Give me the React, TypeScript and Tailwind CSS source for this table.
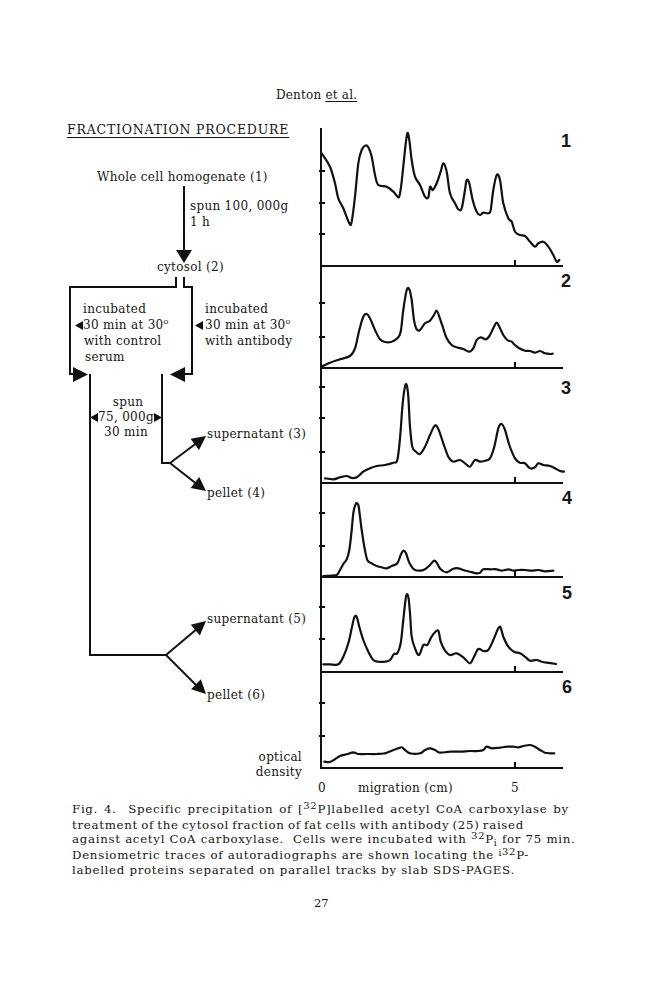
import React from "react";

type P = [number, number];

// traces read off the scan, in 3x zoom coords relative to an origin
const traces: { ox: number; oy: number; pts: P[] }[] = [
  {
    ox: 310,
    oy: 110,
    pts: [
      [35, 130], [60, 170], [75, 220], [85, 265], [100, 295], [118, 340], [125, 335], [135, 260], [145, 160], [155, 120],
      [165, 107], [175, 112], [185, 140], [195, 195], [205, 225], [230, 230], [250, 245], [265, 262], [270, 250], [275, 215],
      [285, 120], [292, 70], [298, 90], [305, 150], [315, 200], [330, 225], [345, 260], [355, 262], [360, 230], [368, 240],
      [380, 220], [392, 185], [400, 160], [410, 185], [420, 250], [435, 280], [445, 298], [455, 295], [465, 240], [470, 210],
      [478, 220], [488, 270], [500, 305], [510, 315], [520, 308], [535, 310], [542, 300], [550, 240], [560, 195], [570, 210],
      [580, 280], [595, 325], [605, 335], [615, 365], [630, 375], [645, 378], [660, 395], [675, 410], [685, 400], [700, 395],
      [715, 410], [730, 435], [740, 455], [748, 450],
    ],
  },
  {
    ox: 310,
    oy: 270,
    pts: [
      [35, 290], [60, 278], [90, 268], [120, 258], [135, 235], [148, 180], [160, 140], [170, 132], [180, 145], [195, 180],
      [210, 208], [225, 216], [245, 215], [262, 205], [272, 185], [280, 120], [290, 60], [298, 58], [305, 90], [312, 150],
      [320, 178], [330, 180], [345, 160], [360, 152], [372, 135], [380, 122], [388, 140], [398, 170], [410, 205], [425, 225],
      [440, 232], [460, 237], [478, 245], [490, 235], [500, 210], [512, 202], [528, 208], [540, 195], [552, 170], [560, 158],
      [568, 170], [580, 195], [592, 210], [605, 215], [615, 225], [628, 235], [645, 242], [660, 243], [675, 248], [690, 243],
      [705, 250], [720, 252], [728, 251],
    ],
  },
  {
    ox: 310,
    oy: 270,
    pts: [
      [45, 625], [70, 628], [90, 622], [110, 618], [125, 624], [140, 622], [160, 605], [180, 595], [200, 588], [225, 585],
      [250, 578], [262, 570], [270, 505], [278, 400], [285, 350], [290, 345], [295, 380], [300, 470], [307, 530], [318, 545],
      [330, 552], [345, 530], [360, 495], [372, 470], [380, 468], [390, 490], [400, 520], [415, 560], [430, 575], [450, 570],
      [465, 580], [480, 590], [495, 570], [510, 575], [525, 572], [540, 565], [553, 530], [565, 475], [575, 462], [585, 480],
      [598, 525], [615, 565], [630, 578], [645, 580], [660, 595], [675, 592], [685, 580], [700, 585], [720, 588], [735, 595],
      [750, 603], [762, 605],
    ],
  },
  {
    ox: 310,
    oy: 480,
    pts: [
      [40, 288], [60, 287], [80, 285], [90, 270], [100, 252], [110, 238], [118, 210], [125, 150], [130, 100], [137, 72],
      [145, 75], [150, 110], [155, 150], [163, 200], [172, 240], [185, 250], [200, 258], [215, 262], [230, 265], [245, 258],
      [262, 250], [272, 225], [280, 212], [288, 220], [298, 248], [312, 268], [330, 272], [345, 268], [360, 255], [372, 242],
      [380, 248], [392, 268], [410, 277], [430, 266], [445, 265], [460, 270], [480, 275], [500, 280], [510, 278], [520, 268],
      [540, 268], [560, 268], [575, 272], [595, 268], [610, 272], [625, 270], [645, 270], [665, 272], [685, 270], [705, 274],
      [730, 272],
    ],
  },
  {
    ox: 310,
    oy: 480,
    pts: [
      [40, 553], [60, 553], [85, 553], [100, 530], [115, 490], [125, 445], [133, 412], [140, 410], [148, 440], [160, 480],
      [175, 515], [190, 540], [205, 545], [225, 545], [240, 540], [252, 522], [262, 520], [272, 490], [280, 420], [288, 350],
      [295, 350], [300, 400], [305, 470], [315, 505], [327, 525], [340, 495], [352, 495], [362, 475], [372, 460], [385, 452],
      [392, 485], [405, 512], [420, 525], [440, 520], [460, 532], [480, 550], [492, 530], [505, 507], [520, 513], [535, 510],
      [550, 480], [565, 445], [572, 443], [580, 470], [595, 500], [612, 515], [630, 520], [645, 530], [660, 542], [680, 540],
      [695, 545], [710, 548], [738, 552],
    ],
  },
  {
    ox: 220,
    oy: 670,
    pts: [
      [313, 275], [330, 276], [345, 268], [360, 258], [380, 253], [400, 247], [415, 252], [440, 252], [470, 252], [495, 250],
      [515, 242], [535, 235], [545, 232], [555, 240], [570, 250], [600, 250], [615, 240], [630, 235], [645, 240], [660, 248],
      [690, 245], [720, 245], [750, 243], [775, 243], [790, 240], [800, 230], [815, 235], [840, 233], [860, 230], [880, 230],
      [895, 232], [910, 228], [930, 225], [945, 230], [960, 240], [975, 248], [990, 250], [1003, 250],
    ],
  },
];

function smooth(raw: P[], ox: number, oy: number) {
  const p = raw.map(([x, y]) => [ox + x / 3, oy + y / 3] as P);
  let d = `M${p[0][0].toFixed(1)} ${p[0][1].toFixed(1)}`;
  for (let i = 0; i < p.length - 1; i++) {
    const p0 = p[i - 1] || p[i];
    const p1 = p[i];
    const p2 = p[i + 1];
    const p3 = p[i + 2] || p2;
    const c1x = p1[0] + (p2[0] - p0[0]) / 6;
    const c1y = p1[1] + (p2[1] - p0[1]) / 6;
    const c2x = p2[0] - (p3[0] - p1[0]) / 6;
    const c2y = p2[1] - (p3[1] - p1[1]) / 6;
    d += ` C${c1x.toFixed(1)} ${c1y.toFixed(1)} ${c2x.toFixed(1)} ${c2y.toFixed(1)} ${p2[0].toFixed(1)} ${p2[1].toFixed(1)}`;
  }
  return d;
}

function head(fx: number, fy: number, tx: number, ty: number, L = 14, W = 7) {
  const dx = tx - fx;
  const dy = ty - fy;
  const len = Math.hypot(dx, dy);
  const ux = dx / len;
  const uy = dy / len;
  const bx = tx - ux * L;
  const by = ty - uy * L;
  return `${tx},${ty} ${bx - uy * W},${by + ux * W} ${bx + uy * W},${by - ux * W}`;
}

const baselines = [266, 368, 483, 577, 672, 768];
const leftTicks = [171, 203, 234, 303, 337, 387, 418, 452, 513, 546, 607, 639, 703, 736];

function Tri({ dir }: { dir: "l" | "r" }) {
  return (
    <svg viewBox="0 0 8 9" className="inline-block w-[8px] h-[9px] align-[-1px]">
      <polygon points={dir === "l" ? "0,4.5 8,0 8,9" : "8,4.5 0,0 0,9"} fill="#111" />
    </svg>
  );
}

function Deg() {
  return <span className="relative -top-[5px] text-[8px]">o</span>;
}

const serif = "font-['DejaVu_Serif',serif]";

export default function App() {
  return (
    <div className={`w-[658px] h-[1000px] bg-white text-[#161616] ${serif}`}>
      <div className="h-[110px] pt-[86px] pl-[276px] text-[12px] tracking-[0.2px]">
        Denton <span className="underline underline-offset-2">et al.</span>
      </div>

      <div className="relative h-[690px] text-[12px] leading-[15px] tracking-[0.3px]">
        <svg className="absolute inset-0 w-[658px] h-[690px]" viewBox="0 110 658 690" fill="none">
          {/* flow chart */}
          <g stroke="#111" strokeWidth="2" fill="none">
            <path d="M184 186 V252" />
            <path d="M176 277 V287 H70 V374 H80" />
            <path d="M184 277 V287 H192 V374 H178" />
            <path d="M90 374 V655 H166" />
            <path d="M162 374 V463 H170" />
            <path d="M170 463 L198 442" />
            <path d="M170 463 L198 485" />
            <path d="M166 655 L198 628" />
            <path d="M166 655 L198 687" />
          </g>
          <g fill="#111">
            <polygon points={head(184, 200, 184, 263, 13, 8)} />
            <polygon points={head(70, 374.5, 88, 374.5, 15, 7.5)} />
            <polygon points={head(192, 374.5, 170, 374.5, 15, 7.5)} />
            <polygon points={head(170, 463, 206, 436)} />
            <polygon points={head(170, 463, 206, 491)} />
            <polygon points={head(166, 655, 206, 621)} />
            <polygon points={head(166, 655, 206, 694)} />
          </g>

          {/* densitometer axes */}
          <g stroke="#111" strokeWidth="2" fill="none">
            <path d="M321 128 V769" />
            {baselines.map((y) => (
              <path key={y} d={`M321 ${y} H563 M515 ${y - 6} V${y}`} />
            ))}
            {leftTicks.map((y) => (
              <path key={y} d={`M319 ${y} H325`} />
            ))}
          </g>
          <g stroke="#111" strokeWidth="2.2" strokeLinejoin="round" strokeLinecap="round" fill="none">
            {traces.map((t, i) => (
              <path key={i} d={smooth(t.pts, t.ox, t.oy)} />
            ))}
          </g>
        </svg>

        <div className="absolute left-[67px] top-[12px] text-[12.5px] tracking-[0.8px] underline underline-offset-[3px]">
          FRACTIONATION PROCEDURE
        </div>
        <div className="absolute left-[97px] top-[60px]">Whole cell homogenate (1)</div>
        <div className="absolute left-[190px] top-[88px] leading-[16px]">
          <div>spun 100, 000g</div>
          <div>1 h</div>
        </div>
        <div className="absolute left-[157px] top-[150px]">cytosol (2)</div>

        <div className="absolute left-[75px] top-[192px] leading-[15.5px]">
          <div className="pl-[8px]">incubated</div>
          <div>
            <Tri dir="l" />
            30 min at 30<Deg />
          </div>
          <div className="pl-[9px]">with control</div>
          <div className="pl-[10px]">serum</div>
        </div>
        <div className="absolute left-[195px] top-[192px] leading-[15.5px]">
          <div className="pl-[10px]">incubated</div>
          <div>
            <Tri dir="l" />
            <span className="pl-[2px]">30 min at 30</span>
            <Deg />
          </div>
          <div className="pl-[10px]">with antibody</div>
        </div>

        <div className="absolute left-[90px] top-[285px] w-[72px] text-center leading-[15px]">
          <div className="pl-[4px]">spun</div>
          <div className="flex items-center justify-between">
            <Tri dir="l" />
            <span>75, 000g</span>
            <Tri dir="r" />
          </div>
          <div>30 min</div>
        </div>

        <div className="absolute left-[207px] top-[317px]">supernatant (3)</div>
        <div className="absolute left-[207px] top-[376px]">pellet (4)</div>
        <div className="absolute left-[207px] top-[502px]">supernatant (5)</div>
        <div className="absolute left-[207px] top-[578px]">pellet (6)</div>

        <div className="absolute left-[232px] top-[640px] w-[70px] text-right leading-[15px]">
          <div>optical</div>
          <div>density</div>
        </div>
        <div className="absolute left-[318px] top-[671px]">0</div>
        <div className="absolute left-[358px] top-[671px]">migration (cm)</div>
        <div className="absolute left-[511px] top-[671px]">5</div>

        <div className="font-['Liberation_Sans',sans-serif] font-bold text-[18px] leading-[20px] tracking-normal">
          <div className="absolute left-[561px] top-[21px]">1</div>
          <div className="absolute left-[561px] top-[161px]">2</div>
          <div className="absolute left-[561px] top-[268px]">3</div>
          <div className="absolute left-[562px] top-[378px]">4</div>
          <div className="absolute left-[562px] top-[473px]">5</div>
          <div className="absolute left-[562px] top-[567px]">6</div>
        </div>
      </div>

      <div className="pl-[72px] pt-[2px] text-[11.8px] leading-[14.6px] tracking-[0.7px] whitespace-nowrap">
        <div className="[word-spacing:1.4px]">
          Fig. 4.&nbsp; Specific precipitation of [<span className="relative -top-[4px] text-[10px]">32</span>P]labelled acetyl CoA carboxylase by
        </div>
        <div className="[word-spacing:-1.2px]">treatment of the cytosol fraction of fat cells with antibody (25) raised</div>
        <div>
          against acetyl CoA carboxylase.&nbsp; Cells were incubated with{" "}
          <span className="relative -top-[4px] text-[10px]">32</span>P
          <span className="relative top-[3px] text-[9px]">i</span> for 75 min.
        </div>
        <div>
          Densiometric traces of autoradiographs are shown locating the{" "}
          <span className="relative -top-[3px] text-[9px]">i</span>
          <span className="relative -top-[4px] text-[10px]">32</span>P-
        </div>
        <div>labelled proteins separated on parallel tracks by slab SDS-PAGES.</div>
      </div>

      <div className="pt-[17px] pl-[314px] text-[11.5px]">27</div>
    </div>
  );
}
